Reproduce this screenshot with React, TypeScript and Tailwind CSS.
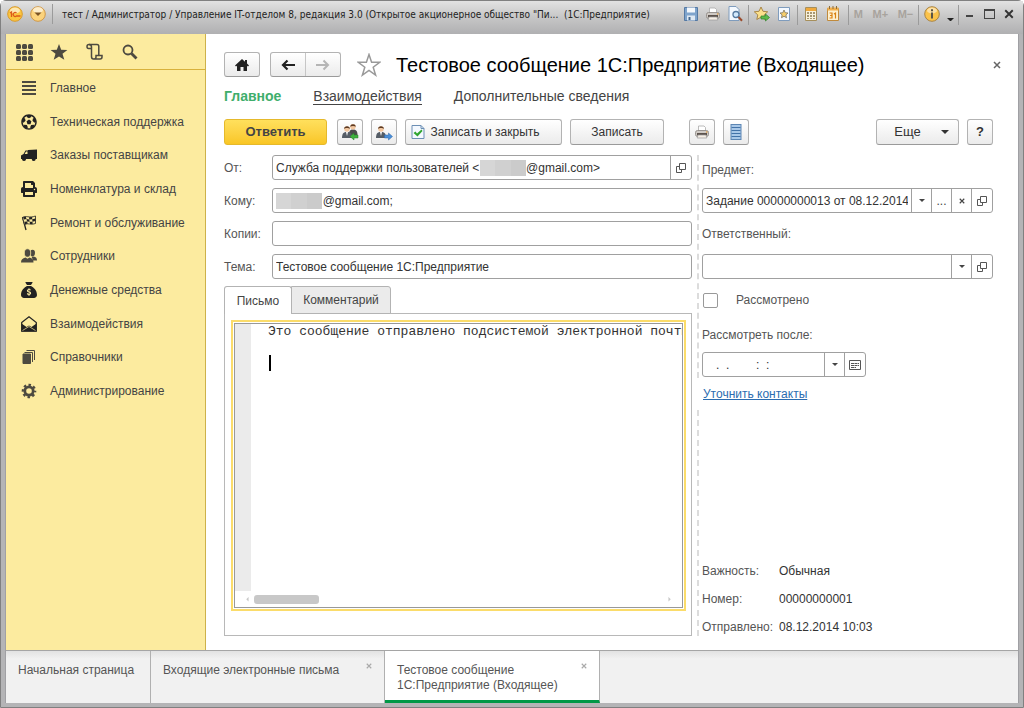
import type { ReactNode } from 'react';
import { FaFutbol, FaPrint } from 'react-icons/fa';
import { FaSackDollar } from 'react-icons/fa6';

const BUTTON =
  'flex items-center justify-center rounded-[3px] border border-[#b3b3b3] border-b-[#9a9a9a] bg-linear-to-b from-white to-[#ebebeb] text-[#333]';
const FIELD = 'relative flex h-[25px] overflow-hidden rounded-[3px] border border-[#a0a0a0] bg-white';
const INPUT = 'min-w-0 flex-1 bg-transparent px-[3px] text-xs text-[#333] outline-none';
const FIELD_BUTTON = 'flex shrink-0 items-center justify-center border-l border-[#a0a0a0] text-[#444]';

// Non-breaking spaces hold the room under the hidden part of an address
const HIDDEN = '\u00a0'.repeat(14);

function Triangle({ className = 'w-[6px]' }: { className?: string }) {
  return (
    <svg viewBox="0 0 8 4" className={className} fill="currentColor">
      <path d="M0 0h8L4 4z" />
    </svg>
  );
}

function Cross({ className = 'size-2' }: { className?: string }) {
  return (
    <svg viewBox="0 0 8 8" className={className} stroke="currentColor" strokeWidth="1.5">
      <path d="M1 1l6 6M7 1L1 7" />
    </svg>
  );
}

function OpenIcon() {
  return (
    <svg viewBox="0 0 10 10" className="size-[10px]" fill="none" stroke="#555">
      <path d="M3.500 .5h6v6h-6z" />
      <path d="M3 3.500H.5v6h5V7" />
    </svg>
  );
}

function CalendarIcon() {
  return (
    <svg viewBox="0 0 12 10" className="h-[10px] w-3" fill="none" stroke="#555">
      <path d="M.5 .5h11v9H.5z" />
      <path d="M2 3.500h8M2 5.500h8M2 7.500h5" strokeDasharray="3 .5" />
    </svg>
  );
}

function PrinterIcon() {
  return (
    <svg viewBox="0 0 16 16" className="size-4">
      <path d="M4.500 7V2h5.500l1.500 1.500V7z" fill="#fff" stroke="#aaa" strokeWidth=".8" />
      <rect x="1.500" y="6.500" width="13" height="6" rx="2" fill="#cfcac5" stroke="#8a8580" strokeWidth=".8" />
      <path d="M3 9h10v2.500H3z" fill="#5d534d" />
      <path d="M4 11h8l.8 3H3.200z" fill="#f6efe6" stroke="#999" strokeWidth=".7" />
      <circle cx="12.800" cy="8" r=".8" fill="#e09a3c" />
    </svg>
  );
}

function UserIcon({ reply = false }: { reply?: boolean }) {
  return (
    <svg viewBox="0 0 18 18" className="size-[18px]">
      {reply && (
        <g>
          <path d="M8 12c0-4 1-5.500 4-5.500s4.500 1.500 4.500 5.500z" fill="#4c4c4c" />
          <circle cx="12" cy="3.800" r="2.700" fill="#f2c7a0" />
          <path d="M9.200 3.800C9.200.5 14.800.5 14.800 3.800 13.500 2.800 10.500 2.800 9.200 3.800z" fill="#5b3a24" />
        </g>
      )}
      <path d="M1 15c0-4.500 1.500-6 5-6s5 1.500 5 6z" fill="#555d66" />
      <path d="M5 9h2l-1 4z" fill="#fff" />
      <circle cx="6" cy="6" r="2.800" fill="#f2c7a0" />
      <path d="M3 6C3 2.300 9 2.300 9 6 7.700 4.800 4.300 4.800 3 6z" fill="#5b3a24" />
      {reply ? (
        <path d="M9 13.500l4-3.500v2h4v3h-4v2z" fill="#3fb13f" stroke="#27832b" strokeWidth=".5" />
      ) : (
        <path d="M17.500 13.500l-4-3.500v2h-4v3h4v2z" fill="#4b8fd8" stroke="#2a66ab" strokeWidth=".5" />
      )}
    </svg>
  );
}

function SaveCloseIcon() {
  return (
    <svg viewBox="0 0 14 16" className="h-4 w-[14px]">
      <path d="M1 1.500h9l3 3v10H1z" fill="#f4f9ff" stroke="#6c8fb5" />
      <path d="M10 1.500v3h3" fill="none" stroke="#6c8fb5" />
      <path d="M2.500 9l2-1.500L6 9.500l4.500-4L11.500 7 6.500 12.500z" fill="#2fa52f" />
    </svg>
  );
}

function ListIcon() {
  return (
    <svg viewBox="0 0 12 16" className="h-4 w-3">
      <rect x="1" y=".5" width="10" height="15" fill="#a9c8e8" stroke="#5c86b4" />
      <path d="M1.500 3.500h9M1.500 6.500h9M1.500 9.500h9M1.500 12.500h9" stroke="#4373a8" />
    </svg>
  );
}

const navItems: { label: string; icon: ReactNode }[] = [
  {
    label: 'Главное',
    icon: (
      <svg viewBox="0 0 16 16" className="size-4" stroke="#4d4a40" strokeWidth="2">
        <path d="M1 2h14M1 6h14M1 10h14M1 14h14" />
      </svg>
    ),
  },
  { label: 'Техническая поддержка', icon: <FaFutbol className="size-4" /> },
  {
    label: 'Заказы поставщикам',
    icon: (
      <svg viewBox="0 0 16 16" className="size-4" fill="currentColor">
        <path d="M0 12V8.500L2.500 7 4.500 3.500H7V3l9-.5V12h-1.300a2 2 0 0 1-4 0H5a2 2 0 0 1-4 0z" />
        <path d="M3.600 7L5 4.500h1.500V7z" fill="#fceb9f" />
        <circle cx="3" cy="12" r="1.500" />
        <circle cx="12.700" cy="12" r="1.500" />
      </svg>
    ),
  },
  { label: 'Номенклатура и склад', icon: <FaPrint className="size-4" /> },
  {
    label: 'Ремонт и обслуживание',
    icon: (
      <svg viewBox="0 0 16 16" className="size-4">
        <path d="M1.500 2L5 15" stroke="currentColor" strokeWidth="1.300" />
        <path d="M1.500 2.500C5 0 8 3.500 14.500 1v7.500C10 10.500 7 7.500 3.500 9.500z" fill="#fceb9f" stroke="currentColor" strokeWidth=".8" />
        <path
          d="M2 2.300L4.800 1.700 5.500 4 3 4.600zM8 2.200l3.200-.1v2.200l-2.900.1zM5.500 4l2.800.4.3 2.300-2.600-.3zM11.200 4.300l3.300-.8V6l-3 .7zM3.400 6.800L6 6.400l.8 2-2.900.8zM8.600 6.700l2.900 0 .2 2.400-2.700-.2z"
          fill="currentColor"
        />
      </svg>
    ),
  },
  {
    label: 'Сотрудники',
    icon: (
      <svg viewBox="0 0 16 16" className="size-4" fill="#4d4a40">
        <ellipse cx="11.500" cy="5" rx="2.500" ry="3.200" />
        <path d="M10.500 8.500h2c2.500.8 3.500 1.500 3.500 4h-4z" />
        <ellipse cx="6.500" cy="5" rx="3.200" ry="4.200" stroke="#fceb9f" strokeWidth=".8" />
        <path d="M0 14.500c0-3 1.500-4 4.500-5l2 1.200 2-1.200c3 1 4 2 4 5z" />
      </svg>
    ),
  },
  { label: 'Денежные средства', icon: <FaSackDollar className="size-4" /> },
  {
    label: 'Взаимодействия',
    icon: (
      <svg viewBox="0 0 16 16" className="size-4">
        <path d="M.7 6.500L8 .8l7.300 5.700v8.700H.7z" fill="#fceb9f" stroke="currentColor" strokeWidth="1.200" />
        <path d="M.5 7.500L5.500 11 8 9.500l2.500 1.500 5-3.500v8H.5z" fill="currentColor" />
        <path d="M1.500 14.500L8 10.500l6.500 4" fill="none" stroke="#fceb9f" strokeWidth=".7" />
      </svg>
    ),
  },
  {
    label: 'Справочники',
    icon: (
      <svg viewBox="0 0 16 16" className="size-4" fill="none" stroke="#4d4a40">
        <path d="M2 5h7.500v9.500H2z" fill="#4d4a40" />
        <path d="M3.500 3.500h8v9.500M5.500 1.500h8v9.500" />
      </svg>
    ),
  },
  {
    label: 'Администрирование',
    icon: (
      <svg viewBox="0 0 16 16" className="size-4" fill="none" stroke="#4d4a40">
        <circle cx="8" cy="8" r="4.200" strokeWidth="2.800" />
        <circle cx="8" cy="8" r="6.200" strokeWidth="2.200" strokeDasharray="2.500 2.370" strokeDashoffset="1.250" />
      </svg>
    ),
  },
];

function Separator() {
  return <span className="h-5 w-px shrink-0 self-start bg-[#9b9b9b]" />;
}

function TitleButton({ label, children }: { label: string; children: ReactNode }) {
  return (
    <button aria-label={label} className="flex w-[22px] items-center justify-center">
      {children}
    </button>
  );
}

function TitleBar() {
  return (
    <header className="flex h-[33px] shrink-0 items-start bg-linear-to-b from-[#e2e2e2] via-[#c6c6c6] to-[#b0b0b2] pt-1 pr-1 text-[#222]">
      <div className="flex h-[18px] min-w-0 flex-1 items-center">
        <button aria-label="Главное меню" className="ml-[6px]">
          <svg viewBox="0 0 16 16" className="size-4">
            <circle cx="8" cy="8" r="7.300" fill="#fbc53f" stroke="#d99a2b" />
            <ellipse cx="8" cy="4.500" rx="5" ry="3" fill="#fff" opacity=".6" />
            <path d="M3 7l1.500-1v5M9.500 7a2 2 0 1 0 0 3h4" fill="none" stroke="#dc5a1c" strokeWidth="1.300" />
          </svg>
        </button>
        <button aria-label="Меню" className="ml-[7px]">
          <svg viewBox="0 0 16 16" className="size-4">
            <circle cx="8" cy="8" r="7.300" fill="#fbd37c" stroke="#d09848" />
            <ellipse cx="8" cy="4" rx="5" ry="3" fill="#fff" opacity=".6" />
            <path d="M4.500 6.500h7L8 10z" fill="#7a5223" />
          </svg>
        </button>
        <span className="ml-[6px] h-5 w-px bg-[#9b9b9b]" />
        <h1 className="ml-[9px] font-['DejaVu_Sans_Condensed','Liberation_Sans',sans-serif] text-[10px] whitespace-pre">
          тест / Администратор / Управление IT-отделом 8, редакция 3.0 (Открытое акционерное общество "Пи...  (1С:Предприятие)
        </h1>
      </div>
      <div className="flex h-[18px] shrink-0 items-center">
        <TitleButton label="Сохранить">
          <svg viewBox="0 0 16 16" className="size-4">
            <path d="M1.500 1.500h13v13h-13z" fill="#7fa4cc" stroke="#5579a3" />
            <path d="M4 1.500h8v5H4z" fill="#f4f8fc" />
            <path d="M4 9.500h8v5H4z" fill="#dfe9f3" />
            <path d="M5.500 11h2v3h-2z" fill="#44688f" />
          </svg>
        </TitleButton>
        <TitleButton label="Печать">
          <PrinterIcon />
        </TitleButton>
        <TitleButton label="Просмотр">
          <svg viewBox="0 0 16 16" className="size-4">
            <path d="M2 .5h7l3 3v11H2z" fill="#f4f9ff" stroke="#7f9cbd" />
            <circle cx="9" cy="8.500" r="3" fill="#d3e9fb" stroke="#56799f" strokeWidth="1.300" />
            <path d="M11.500 11l3.500 3.800" stroke="#9a4a2b" strokeWidth="2" />
          </svg>
        </TitleButton>
        <div className="w-[2px]" />
        <Separator />
        <div className="w-[2px]" />
        <TitleButton label="В избранное">
          <svg viewBox="0 0 16 16" className="size-4">
            <path d="M7 1l2 4.300 4.700.5-3.500 3.100 1 4.600L7 11.200l-4.200 2.300 1-4.600L.3 5.800 5 5.300z" fill="#fbe08c" stroke="#a98748" />
            <path d="M15.500 11.500L11.500 8v2H7v3h4.500v2z" fill="#5dba4c" stroke="#2f8129" strokeWidth=".7" />
          </svg>
        </TitleButton>
        <TitleButton label="Избранное">
          <svg viewBox="0 0 16 16" className="size-4">
            <path d="M2.500 1.500h11v13h-11z" fill="#f4f9ff" stroke="#7f9cbd" />
            <path d="M8 4l1.200 2.700 2.800.3-2.100 1.900.6 2.800L8 10.300l-2.500 1.400.6-2.800L4 7l2.800-.3z" fill="#f7cf6b" stroke="#7a715d" strokeWidth=".8" />
          </svg>
        </TitleButton>
        <div className="w-[2px]" />
        <Separator />
        <div className="w-[2px]" />
        <TitleButton label="Калькулятор">
          <svg viewBox="0 0 16 16" className="size-4">
            <path d="M2.500 1.500h11v13h-11z" fill="#f8f1dc" stroke="#a68f5c" />
            <path d="M3 2h10v3H3z" fill="#f0a93c" />
            <path d="M5 6v7M8 6v7M11 6v7" stroke="#8a7a50" strokeWidth="1.500" strokeDasharray="2 1" />
          </svg>
        </TitleButton>
        <TitleButton label="Календарь">
          <svg viewBox="0 0 16 16" className="size-4">
            <path d="M2.500 2.500h11v12h-11z" fill="#fdf0cf" stroke="#c08a3c" />
            <path d="M2.500 1.500h11v3h-11z" fill="#f3b04c" />
            <path d="M4.500 0v3M8 0v3M11.500 0v3" stroke="#8a6c3c" />
            <path d="M4.500 7H7v5H4.500M5 9.500h2M9 8l1.500-1v5.500" fill="none" stroke="#d98010" strokeWidth="1.200" />
          </svg>
        </TitleButton>
        <div className="w-1" />
        <Separator />
        <div className="flex w-[69px] justify-around text-[11px] font-bold text-[#a8a39d]">
          <button>M</button>
          <button>M+</button>
          <button>M−</button>
        </div>
        <Separator />
        <div className="w-[2px]" />
        <TitleButton label="Справка">
          <svg viewBox="0 0 16 16" className="size-4">
            <circle cx="8" cy="8" r="7.300" fill="#fbc34a" stroke="#a98445" />
            <ellipse cx="8" cy="4.500" rx="5" ry="3" fill="#fff" opacity=".5" />
            <path d="M8 3.200v2M8 6.500v6" stroke="#5b5648" strokeWidth="2" />
          </svg>
        </TitleButton>
        <button aria-label="Ещё" className="flex h-[18px] w-[15px] items-end justify-center pb-[2px]">
          <Triangle className="w-[7px]" />
        </button>
        <Separator />
        <button aria-label="Свернуть" className="flex w-5 justify-center pt-1">
          <span className="h-[2px] w-[7px] bg-[#444]" />
        </button>
        <button aria-label="Развернуть" className="flex w-5 justify-center">
          <span className="h-[10px] w-[11px] border border-t-2 border-[#444]" />
        </button>
        <button aria-label="Закрыть" className="flex w-5 justify-center text-[#333]">
          <Cross className="size-[10px]" />
        </button>
      </div>
    </header>
  );
}

function Sidebar() {
  return (
    <aside className="w-[200px] shrink-0 border-r border-[#cdb14a] bg-[#fceb9f]">
      <div className="flex h-9 items-center border-b border-[#d8b13c] pl-[9px] text-[#4d4a40]">
        <button aria-label="Разделы" className="mr-[17px]">
          <svg viewBox="0 0 18 18" className="size-[18px]" fill="currentColor">
            {[1, 7, 13].map((y) => [1, 7, 13].map((x) => <rect key={`${x}-${y}`} x={x} y={y} width="5" height="5" rx="1.500" />))}
          </svg>
        </button>
        <button aria-label="Избранное" className="mr-[18px]">
          <svg viewBox="0 0 18 18" className="size-[18px]" fill="currentColor">
            <path d="M9 1l2.200 5.800 6.200.2-4.900 3.800 1.800 6L9 13.400l-5.300 3.400 1.800-6L.6 7l6.200-.2z" />
          </svg>
        </button>
        <button aria-label="История" className="mr-[17px]">
          <svg viewBox="0 0 18 18" className="size-[18px]" fill="none" stroke="currentColor" strokeWidth="1.500">
            <path d="M5.500 5.500H2.500c-1 0-1.500-.8-1.500-2s.8-2 2-2H11c1.200 0 1.800.8 1.800 2v9" />
            <path d="M3 1.500c1.500 0 2.500.8 2.500 2.500v9.500c0 1.500.8 2.500 2 2.500H14c1.200 0 2-.8 2-2v-1.500h-6V14c0 1.300-.8 2-2 2" />
          </svg>
        </button>
        <button aria-label="Поиск">
          <svg viewBox="0 0 18 18" className="size-[18px]" fill="none" stroke="currentColor">
            <circle cx="7" cy="7" r="4.500" strokeWidth="1.800" />
            <path d="M10.500 10.500l5 5" strokeWidth="2.800" />
          </svg>
        </button>
      </div>
      <nav className="mt-px grid h-[337px] grid-rows-10">
        {navItems.map((item) => (
          <a key={item.label} href="#" className="flex items-center pl-[15px] text-xs text-[#444]">
            <span className="mr-[13px] flex w-4 justify-center text-[#222]">{item.icon}</span>
            {item.label}
          </a>
        ))}
      </nav>
    </aside>
  );
}

function FormHeader() {
  return (
    <>
      <div className="flex h-[25px] items-center">
        <button aria-label="Домой" className={`${BUTTON} h-[25px] w-9`}>
          <svg viewBox="0 0 14 12" className="h-3 w-[14px]" fill="#222">
            <path d="M7 0L0 6.500l1 1 1-.8V12h3.500V8h3v4H12V6.700l1 .8 1-1L12 4.500V1h-2v1.800z" />
          </svg>
        </button>
        <div className={`${BUTTON} ml-[10px] h-[25px] w-[71px]`}>
          <button aria-label="Назад" className="flex h-full flex-1 items-center justify-center border-r border-[#c6c6c6]">
            <svg viewBox="0 0 14 12" className="h-3 w-[14px]" fill="none" stroke="#222" strokeWidth="2.200">
              <path d="M14 6H2M6.500 1.500L2 6l4.500 4.500" />
            </svg>
          </button>
          <button aria-label="Вперёд" className="flex h-full flex-1 items-center justify-center">
            <svg viewBox="0 0 14 12" className="h-3 w-[14px]" fill="none" stroke="#b5b5b5" strokeWidth="2">
              <path d="M0 6h12M7.500 1.500L12 6l-4.500 4.500" />
            </svg>
          </button>
        </div>
        <button aria-label="Добавить в избранное" className="ml-4">
          <svg viewBox="0 0 24 24" className="size-6" fill="none" stroke="#999" strokeWidth="1.500">
            <path d="M12 1.500l2.600 7.700 8.100.1-6.500 4.900 2.400 7.800L12 17.300l-6.600 4.700 2.400-7.800-6.500-4.900 8.100-.1z" />
          </svg>
        </button>
        <h2 className="ml-[15px] text-[20px] text-black">Тестовое сообщение 1С:Предприятие (Входящее)</h2>
        <button aria-label="Закрыть форму" className="-mr-2 ml-auto text-[#666]">
          <Cross />
        </button>
      </div>
      <nav className="mt-[10px] flex h-[18px] items-center gap-8 text-[14px] text-[#444]">
        <a href="#" className="font-bold text-[#3fae6c]">Главное</a>
        <a href="#" className="border-b border-[#444] leading-4">Взаимодействия</a>
        <a href="#">Дополнительные сведения</a>
      </nav>
    </>
  );
}

function CommandBar() {
  return (
    <div className="mt-[14px] flex h-[26px] text-xs">
      <button className="w-[103px] rounded-[3px] border border-[#e5b92c] bg-linear-to-b from-[#ffe05c] to-[#f9c623] text-[13px] font-bold text-[#444]">
        Ответить
      </button>
      <button aria-label="Ответить всем" className={`${BUTTON} ml-[10px] w-[26px]`}>
        <UserIcon reply />
      </button>
      <button aria-label="Переслать" className={`${BUTTON} ml-2 w-[26px]`}>
        <UserIcon />
      </button>
      <button className={`${BUTTON} ml-2 w-[157px] gap-[5px] pr-4`}>
        <SaveCloseIcon />
        Записать и закрыть
      </button>
      <button className={`${BUTTON} ml-2 w-[94px]`}>Записать</button>
      <button aria-label="Печать" className={`${BUTTON} ml-[25px] w-[26px]`}>
        <PrinterIcon />
      </button>
      <button aria-label="Список" className={`${BUTTON} ml-2 w-[26px]`}>
        <ListIcon />
      </button>
      <button className={`${BUTTON} ml-auto w-[83px] gap-5 pl-2 text-[13px]`}>
        Еще
        <Triangle className="w-2" />
      </button>
      <button className={`${BUTTON} ml-2 w-[26px] text-[13px] font-bold`}>?</button>
    </div>
  );
}

function Mask({ className }: { className: string }) {
  return (
    <span className={`absolute top-1 flex h-4 w-[46px] ${className}`}>
      <span className="flex-1 bg-[#d6d6d6]" />
      <span className="flex-1 bg-[#d0d0d0]" />
      <span className="flex-1 bg-[#cbcbcb]" />
    </span>
  );
}

function MessageFields() {
  return (
    <div className="grid grid-cols-[48px_1fr] items-center gap-y-2 text-xs text-[#555]">
      <label htmlFor="from">От:</label>
      <div className={FIELD}>
        <input id="from" className={INPUT} defaultValue={`Служба поддержки пользователей <${HIDDEN}@gmail.com>`} />
        <Mask className="left-[207px]" />
        <button aria-label="Открыть отправителя" className={`${FIELD_BUTTON} w-[21px]`}>
          <OpenIcon />
        </button>
      </div>
      <label htmlFor="to">Кому:</label>
      <div className={FIELD}>
        <input id="to" className={INPUT} defaultValue={`${HIDDEN}@gmail.com;`} />
        <Mask className="left-[3px]" />
      </div>
      <label htmlFor="copy">Копии:</label>
      <div className={FIELD}>
        <input id="copy" className={INPUT} />
      </div>
      <label htmlFor="subject">Тема:</label>
      <div className={FIELD}>
        <input id="subject" className={INPUT} defaultValue="Тестовое сообщение 1С:Предприятие" />
      </div>
    </div>
  );
}

function MessageBody() {
  return (
    <div className="mt-[7px] flex flex-1 flex-col">
      <div className="relative z-10 -mb-px flex h-7 text-xs text-[#444]">
        <button className="w-[68px] rounded-t-[3px] border border-b-0 border-[#b3b3b3] bg-white">Письмо</button>
        <button className="-ml-px w-[100px] rounded-tr-[3px] border border-[#b3b3b3] bg-[#ebebeb]">Комментарий</button>
      </div>
      <div className="flex flex-1 border border-[#b8b8b8] pt-[6px] pr-[5px] pb-6 pl-[6px]">
        <div className="flex flex-1 border-2 border-[#fbdc6a] p-px">
          <div className="relative flex flex-1 flex-col border border-[#999]">
            <div className="flex flex-1">
              <div className="w-4 bg-[#ebebeb]" />
              <textarea
                aria-label="Текст письма"
                wrap="off"
                className="min-w-0 flex-1 resize-none overflow-hidden pl-[17px] font-['Liberation_Mono',monospace] text-[13px] leading-[15px] text-[#333] outline-none"
                defaultValue="Это сообщение отправлено подсистемой электронной почты"
              />
            </div>
            <span className="absolute top-[31px] left-[34px] h-4 w-[2px] bg-black" />
            <div className="flex h-4 items-center px-[10px] text-[#c8c8c8]">
              <Triangle className="w-[5px] rotate-90" />
              <span className="ml-1 h-[9px] w-[65px] rounded-[3px] bg-[#c8c8c8]" />
              <Triangle className="ml-auto w-[5px] -rotate-90" />
            </div>
          </div>
        </div>
      </div>
    </div>
  );
}

function Details() {
  return (
    <div className="flex w-[296px] flex-col text-xs text-[#555]">
      <div className="border-l-2 border-dashed border-[#dcdcdc] pb-px pl-[3px]">
        <label htmlFor="topic" className="flex h-[33px] items-center pb-1">Предмет:</label>
        <div className={FIELD}>
          <input id="topic" className={INPUT} defaultValue="Задание 00000000013 от 08.12.2014 10:02:47" />
          <button aria-label="Выбрать предмет" className={`${FIELD_BUTTON} w-5`}>
            <Triangle />
          </button>
          <button aria-label="Подобрать" className={`${FIELD_BUTTON} w-5`}>...</button>
          <button aria-label="Очистить" className={`${FIELD_BUTTON} w-5`}>
            <Cross className="size-[6px]" />
          </button>
          <button aria-label="Открыть предмет" className={`${FIELD_BUTTON} w-[21px]`}>
            <OpenIcon />
          </button>
        </div>
        <label htmlFor="owner" className="flex h-[41px] items-center">Ответственный:</label>
        <div className={FIELD}>
          <input id="owner" className={INPUT} />
          <button aria-label="Выбрать ответственного" className={`${FIELD_BUTTON} w-5`}>
            <Triangle />
          </button>
          <button aria-label="Открыть ответственного" className={`${FIELD_BUTTON} w-[21px]`}>
            <OpenIcon />
          </button>
        </div>
        <label className="flex h-[42px] items-center gap-[18px] pl-px">
          <input type="checkbox" className="size-[15px] appearance-none rounded-[2px] border border-[#999] bg-white" />
          Рассмотрено
        </label>
        <label htmlFor="after" className="flex h-[31px] items-center pb-1">Рассмотреть после:</label>
        <div className={`${FIELD} w-[164px]`}>
          <input id="after" className={`${INPUT} whitespace-pre`} defaultValue={'   .  .        :  :'} />
          <button aria-label="Выбрать дату" className={`${FIELD_BUTTON} w-5`}>
            <Triangle />
          </button>
          <button aria-label="Календарь" className={`${FIELD_BUTTON} w-[21px]`}>
            <CalendarIcon />
          </button>
        </div>
      </div>
      <div className="flex h-8 items-center pl-[6px]">
        <a href="#" className="text-[#2b6cb0] underline">Уточнить контакты</a>
      </div>
      <div className="flex flex-1 flex-col justify-end border-l-2 border-dashed border-[#dcdcdc] pl-[3px]">
        <dl className="grid grid-cols-[77px_1fr] gap-y-[10px] leading-[18px]">
          <dt>Важность:</dt>
          <dd className="text-[#333]">Обычная</dd>
          <dt>Номер:</dt>
          <dd className="text-[#333]">00000000001</dd>
          <dt>Отправлено:</dt>
          <dd className="text-[#333]">08.12.2014 10:03</dd>
        </dl>
      </div>
    </div>
  );
}

function WindowTabs() {
  return (
    <footer className="flex h-[53px] shrink-0 border-t border-[#a5a5a5] bg-linear-to-b from-[#e2e2e2] via-[#f1f1f1] via-15% to-[#f1f1f1] text-xs leading-[15px] text-[#555]">
      <div className="w-[145px] border-r border-[#b0b0b0] pt-3 pl-3">
        <button>Начальная страница</button>
      </div>
      <div className="flex w-[234px] items-start justify-between border-r border-[#b0b0b0] pt-3 pr-3 pl-3">
        <button>Входящие электронные письма</button>
        <button aria-label="Закрыть вкладку" className="text-[#aaa]">
          <Cross className="size-[6px]" />
        </button>
      </div>
      <div className="flex w-[215px] items-start justify-between border-r border-b-3 border-[#b0b0b0] border-b-[#009846] bg-white pt-3 pr-3 pl-3">
        <button className="text-left">
          Тестовое сообщение
          <br />
          1С:Предприятие (Входящее)
        </button>
        <button aria-label="Закрыть вкладку" className="text-[#aaa]">
          <Cross className="size-[6px]" />
        </button>
      </div>
    </footer>
  );
}

export default function App() {
  return (
    <div className="flex min-h-screen flex-col rounded-t-md border border-[#808080] bg-[#b4b4b6] font-['Liberation_Sans',Arial,sans-serif]">
      <TitleBar />
      <div className="mx-1 mb-1 flex flex-1 flex-col border-x border-[#a0a0a4] bg-white">
        <div className="flex flex-1">
          <Sidebar />
          <main className="flex min-w-0 flex-1 flex-col pt-[18px] pr-[25px] pb-[14px] pl-[18px]">
            <FormHeader />
            <CommandBar />
            <div className="mt-[10px] flex flex-1 gap-[5px]">
              <div className="flex min-w-0 flex-1 flex-col">
                <MessageFields />
                <MessageBody />
              </div>
              <Details />
            </div>
          </main>
        </div>
        <WindowTabs />
      </div>
    </div>
  );
}
